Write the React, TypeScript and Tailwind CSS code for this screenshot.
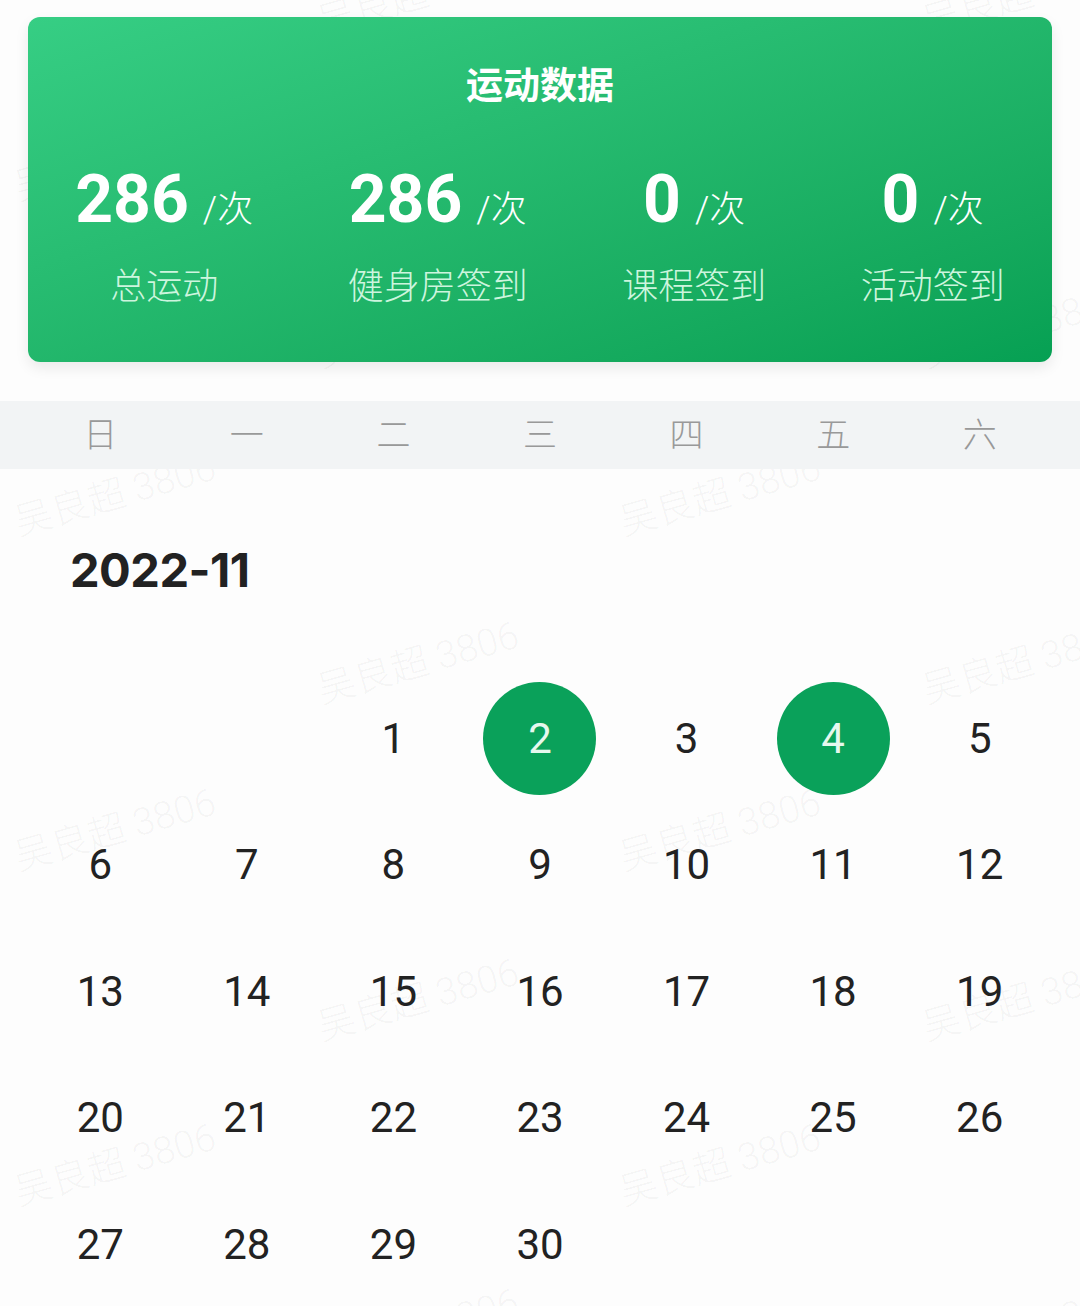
import React from 'react'

const stats = [
  { value: '286', label: '总运动' },
  { value: '286', label: '健身房签到' },
  { value: '0', label: '课程签到' },
  { value: '0', label: '活动签到' },
]

const weekdays = ['日', '一', '二', '三', '四', '五', '六']

// November 2022 starts on a Tuesday
const days: (number | null)[] = [null, null, ...Array.from({ length: 30 }, (_, i) => i + 1)]
const checked = [2, 4]

// watermark centers (x, y)
const marks: [number, number][] = [
  [418, -5], [1023, -5],
  [115, 160], [720, 160],
  [418, 327], [1023, 327],
  [115, 495], [720, 495],
  [418, 663], [1023, 663],
  [115, 830], [720, 830],
  [418, 1000], [1023, 1000],
  [115, 1165], [720, 1165],
  [418, 1330], [1023, 1330],
]

export default function App() {
  return (
    <div
      className="relative h-[1306px] w-[1080px] overflow-hidden bg-[#fdfdfd]"
      style={{ fontFamily: 'Roboto, "Noto Sans CJK SC", sans-serif' }}
    >
      {/* Watermark */}
      <div className="pointer-events-none absolute inset-0">
        {marks.map(([x, y], i) => (
          <div
            key={i}
            className="absolute -translate-x-1/2 -translate-y-1/2 -rotate-[16deg] whitespace-nowrap text-[38px] font-light text-black/[0.045]"
            style={{ left: x, top: y }}
          >
            吴良超 3806
          </div>
        ))}
      </div>

      {/* Summary card */}
      <div className="relative px-[28px] pt-[17px]">
        <div className="h-[345px] rounded-[12px] bg-gradient-to-br from-[#36ce84] to-[#06a053] pt-[50px] shadow-[0_6px_14px_rgba(0,0,0,0.08)]">
          <h1 className="text-center text-[37px] leading-[40px] font-bold text-white">运动数据</h1>
          <div className="mt-[58px] flex justify-around">
            {stats.map((s, i) => (
              <div key={i} className="flex flex-col items-center">
                <div className="flex items-baseline text-white">
                  <span className="text-[66px] leading-[70px] font-bold">{s.value}</span>
                  <span className="ml-[14px] text-[36px] font-light">/次</span>
                </div>
                <div className="mt-[28px] text-[36px] leading-[44px] font-light text-[#cdf5de]">{s.label}</div>
              </div>
            ))}
          </div>
        </div>
      </div>

      {/* Week header */}
      <div className="relative mt-[39px] grid h-[68px] grid-cols-7 items-center bg-[#f2f4f5] px-[27px]">
        {weekdays.map((d) => (
          <div key={d} className="text-center text-[34px] font-light text-[#999]">
            {d}
          </div>
        ))}
      </div>

      {/* Month */}
      <div
        className="relative pl-[70px] pt-[77px] text-[47px] leading-[48px] font-bold tracking-[-0.5px] text-[#222]"
        style={{ fontFamily: 'Inter, sans-serif' }}
      >
        2022-11
      </div>

      {/* Days */}
      <div className="relative mt-[81px] grid grid-cols-7 px-[27px]">
        {days.map((d, i) => (
          <div key={i} className="flex h-[126.5px] items-center justify-center">
            {d !== null &&
              (checked.includes(d) ? (
                <div className="flex h-[113px] w-[113px] items-center justify-center rounded-full bg-[#0aa15a] text-[42px] text-[#e6f8ee]">
                  {d}
                </div>
              ) : (
                <span className="text-[42px] text-[#222]">{d}</span>
              ))}
          </div>
        ))}
      </div>
    </div>
  )
}
